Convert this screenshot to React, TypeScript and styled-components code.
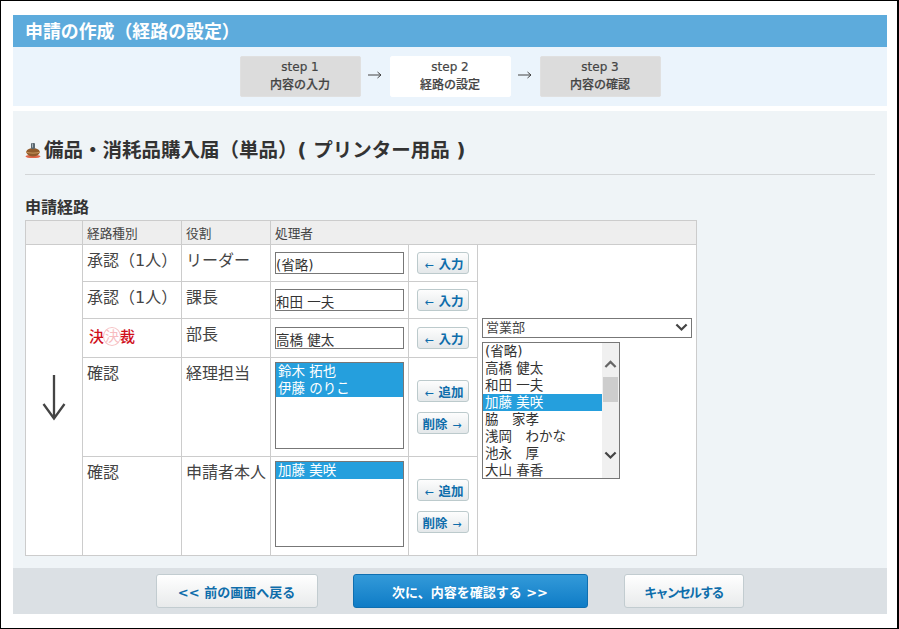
import styled, { createGlobalStyle } from "styled-components";

const GlobalStyle = createGlobalStyle`
  html, body {
    margin: 0;
    padding: 0;
    background: #fff;
  }
  body {
    font-family: "DejaVu Sans", "Noto Sans CJK JP", sans-serif;
    color: #333;
  }
`;

const Frame = styled.div`
  box-sizing: border-box;
  width: 899px;
  height: 629px;
  padding: 14px 10px 14px 12px;
  border: 1px solid #000;
  border-right-width: 2px;
  display: flex;
  flex-direction: column;
`;
const TitleBar = styled.h1`
  margin: 0;
  height: 32px;
  padding-left: 12px;
  background: #5dabdc;
  color: #fff;
  font-size: 17.9px;
  font-weight: 700;
  line-height: 34px;
`;
const StepBar = styled.div`
  height: 59px;
  background: #ebf4fc;
  display: flex;
  justify-content: center;
  align-items: flex-start;
  padding-top: 9px;
  box-sizing: border-box;
  margin-bottom: 5px;
`;
const Step = styled.div<{ $active?: boolean }>`
  box-sizing: border-box;
  width: 121px;
  height: 41px;
  border-radius: 2px;
  background: ${(props) => (props.$active ? "#fff" : "#dcdcdc")};
  border: 1px solid ${(props) => (props.$active ? "#fff" : "#e0e0e0")};
  text-align: center;
  font-size: 12px;
  font-weight: 500;
  line-height: 18px;
  color: #444;
  padding-top: 1px;
  -webkit-text-stroke: 0.2px #444;
`;
const StepNum = styled.div`
  font-size: 12px;
  font-weight: 400;
`;
const StepArrow = styled.div`
  width: 29px;
  height: 38px;
  display: flex;
  align-items: center;
  justify-content: center;
  svg {
    display: block;
  }
`;
const Content = styled.main`
  flex: 1;
  background: #eff4f7;
  padding: 0 12px;
`;
const Heading = styled.h2`
  margin: 0;
  height: 64px;
  border-bottom: 1px solid #d3d6d8;
  display: flex;
  align-items: center;
  padding-top: 11px;
  box-sizing: border-box;
  font-size: 19.5px;
  font-weight: 700;
  color: #333;
  white-space: nowrap;
  svg {
    margin-right: 3px;
    margin-top: 3px;
  }
`;
const SectionLabel = styled.h3`
  margin: 21px 0 0;
  height: 24px;
  font-size: 16px;
  font-weight: 700;
  line-height: 24px;
  color: #333;
`;
const RouteTable = styled.table`
  border-collapse: collapse;
  table-layout: fixed;
  width: 671px;
  background: #fff;
  th,
  td {
    border: 1px solid #ccc;
    padding: 0;
    box-sizing: border-box;
  }
`;
const Column = styled.col<{ $w: number }>`
  width: ${(props) => props.$w}px;
`;
const HeadCell = styled.th`
  height: 24px;
  background: #eee;
  font-size: 12.7px;
  font-weight: 400;
  text-align: left;
  padding-left: 4px !important;
  color: #444;
`;
const TextCell = styled.td<{ $h: number }>`
  height: ${(props) => props.$h}px;
  vertical-align: top;
  font-size: 16px;
  line-height: 22px;
  padding: 5px 0 0 4px !important;
  color: #444;
  white-space: nowrap;
`;
const ArrowCell = styled.td`
  text-align: center;
  vertical-align: middle;
  padding-bottom: 4px !important;
  svg {
    display: block;
    margin: 0 auto;
  }
`;
const FieldCell = styled.td`
  vertical-align: middle;
  padding-left: 4px !important;
`;
const ListCell = styled.td`
  vertical-align: top;
  padding: 4px 0 0 4px !important;
`;
const NameInput = styled.div`
  box-sizing: border-box;
  width: 129px;
  height: 22px;
  border: 1px solid #777;
  background: #fff;
  font-size: 13.5px;
  line-height: 25px;
  color: #333;
  overflow: hidden;
`;
const ListBox = styled.div<{ $h: number; $w: number }>`
  box-sizing: border-box;
  width: ${(props) => props.$w}px;
  height: ${(props) => props.$h}px;
  border: 1px solid #777;
  background: #fff;
  display: flex;
  overflow: hidden;
`;
const ListItems = styled.div`
  flex: 1;
  min-width: 0;
`;
const ListItem = styled.div<{ $selected?: boolean }>`
  height: 17px;
  line-height: 17px;
  font-size: 13.5px;
  padding-left: 2px;
  white-space: pre;
  background: ${(props) => (props.$selected ? "#259fdd" : "transparent")};
  color: ${(props) => (props.$selected ? "#fff" : "#333")};
`;
const ScrollTrack = styled.div`
  width: 17px;
  background: #f0f0f0;
  display: flex;
  flex-direction: column;
  align-items: center;
  justify-content: space-between;
  position: relative;
  padding: 17px 0 18px;
  box-sizing: border-box;
  svg {
    display: block;
  }
`;
const ScrollThumb = styled.div`
  position: absolute;
  top: 34px;
  left: 1px;
  width: 15px;
  height: 25px;
  background: #cdcdcd;
`;
const ButtonCell = styled.td`
  vertical-align: middle;
`;
const ButtonStack = styled.div`
  display: flex;
  flex-direction: column;
  align-items: center;
  gap: 10px;
`;
const SmallButton = styled.button`
  box-sizing: border-box;
  width: 52px;
  height: 22px;
  padding: 0;
  border: 1px solid #bccacc;
  border-radius: 3px;
  background: linear-gradient(#fdfdfd, #e4e8ea);
  color: #0e6dab;
  font-family: "Noto Sans CJK JP", sans-serif;
  font-size: 12.5px;
  font-weight: 700;
  white-space: nowrap;
`;
const ButtonArrow = styled.span`
  font-family: "DejaVu Sans", sans-serif;
  font-size: 11px;
  font-weight: 400;
  margin: 0 2px;
`;
const PickerCell = styled.td`
  vertical-align: middle;
  padding: 0 0 4px 4px !important;
`;
const Dropdown = styled.div`
  box-sizing: border-box;
  width: 210px;
  height: 20px;
  border: 1px solid #777;
  background: #fff;
  font-size: 13px;
  line-height: 21px;
  padding-left: 3px;
  margin-bottom: 4px;
  display: flex;
  justify-content: space-between;
  align-items: center;
  color: #444;
  svg {
    margin-right: 3px;
  }
`;
const Stamp = styled.span`
  display: inline-flex;
  align-items: center;
  margin: 3px 0 0 2px;
  color: #d0101c;
  font-size: 15px;
  font-weight: 500;
  line-height: 18px;
`;
const StampMark = styled.span`
  box-sizing: border-box;
  width: 18px;
  height: 19px;
  margin: 0 -1px;
  border: 1px solid #f6c4c6;
  border-radius: 50%;
  color: #f7bcc0;
  font-size: 14px;
  font-weight: 400;
  line-height: 17px;
  text-align: center;
`;
const Footer = styled.footer`
  height: 46px;
  background: #dbe0e4;
  display: flex;
  justify-content: center;
  align-items: flex-start;
  padding: 6px 1px 0 0;
  box-sizing: border-box;
  gap: 35px;
`;
const FooterButton = styled.button<{ $w: number; $primary?: boolean; $tight?: boolean }>`
  box-sizing: border-box;
  width: ${(props) => props.$w}px;
  height: 34px;
  padding: 0;
  border-radius: 3px;
  border: 1px solid ${(props) => (props.$primary ? "#0f6fb0" : "#c2ccd0")};
  background: ${(props) =>
    props.$primary
      ? "linear-gradient(#339ad9, #0f7cc6)"
      : "linear-gradient(#ffffff, #e8eaeb)"};
  color: ${(props) => (props.$primary ? "#fff" : "#0e6dab")};
  font-family: inherit;
  font-size: 13px;
  font-weight: 700;
  white-space: nowrap;
  letter-spacing: ${(props) => (props.$tight ? "-1.8px" : "0")};
  margin-left: ${(props) => (props.$tight ? "1px" : "0")};
`;

const Chevron = ({ up, size = 14 }: { up?: boolean; size?: number }) => (
  <svg width={size} height={size * 0.65} viewBox="0 0 14 9">
    <path
      d={up ? "M1.5 7.5 L7 2 L12.5 7.5" : "M1.5 1.5 L7 7 L12.5 1.5"}
      fill="none"
      stroke={up ? "#666" : "#444"}
      strokeWidth="2.4"
    />
  </svg>
);

const SmallArrow = () => (
  <svg width="14" height="8" viewBox="0 0 14 8">
    <path d="M0 4 H13 M9.5 1 L13 4 L9.5 7" fill="none" stroke="#444" strokeWidth="1" />
  </svg>
);

const TopIcon = () => (
  <svg width="16" height="18" viewBox="0 0 16 18">
    <ellipse cx="8" cy="15.5" rx="7.5" ry="1.6" fill="#e0664a" />
    <path d="M1 11 C2 8 5 7 8 7 C11 7 14 8 15 11 C14 14 11 15.5 8 15.5 C5 15.5 2 14 1 11 Z" fill="#8f5a2c" />
    <path d="M1 11 C4 12.5 12 12.5 15 11" fill="none" stroke="#c9985e" strokeWidth="1" />
    <rect x="6" y="2" width="4" height="6" rx="1" fill="#5b6870" />
    <rect x="7" y="2.5" width="1" height="4" fill="#aab4ba" />
  </svg>
);

const DownArrow = () => (
  <svg width="24" height="46" viewBox="0 0 24 46">
    <path d="M12 0 V44 M1.5 29 L12 43.5 L22.5 29" fill="none" stroke="#444" strokeWidth="2.3" />
  </svg>
);

const people = [
  "(省略)",
  "高橋 健太",
  "和田 一夫",
  "加藤 美咲",
  "脇　家孝",
  "浅岡　わかな",
  "池永　厚",
  "大山 春香",
];

const InputButton = () => (
  <ButtonStack>
    <SmallButton>
      <ButtonArrow>←</ButtonArrow> 入力
    </SmallButton>
  </ButtonStack>
);

const AddRemoveButtons = () => (
  <ButtonStack>
    <SmallButton>
      <ButtonArrow>←</ButtonArrow> 追加
    </SmallButton>
    <SmallButton>
      削除 <ButtonArrow>→</ButtonArrow>
    </SmallButton>
  </ButtonStack>
);

function App() {
  return (
    <Frame>
      <GlobalStyle />
      <TitleBar>申請の作成（経路の設定）</TitleBar>
      <StepBar>
        <Step>
          <StepNum>step 1</StepNum>内容の入力
        </Step>
        <StepArrow>
          <SmallArrow />
        </StepArrow>
        <Step $active>
          <StepNum>step 2</StepNum>経路の設定
        </Step>
        <StepArrow>
          <SmallArrow />
        </StepArrow>
        <Step>
          <StepNum>step 3</StepNum>内容の確認
        </Step>
      </StepBar>
      <Content>
        <Heading>
          <TopIcon />
          備品・消耗品購入届（単品）( プリンター用品 )
        </Heading>
        <SectionLabel>申請経路</SectionLabel>
        <RouteTable>
          <colgroup>
            <Column $w={57} />
            <Column $w={99} />
            <Column $w={89} />
            <Column $w={138} />
            <Column $w={69} />
            <Column $w={219} />
          </colgroup>
          <thead>
            <tr>
              <HeadCell />
              <HeadCell>経路種別</HeadCell>
              <HeadCell>役割</HeadCell>
              <HeadCell colSpan={3}>処理者</HeadCell>
            </tr>
          </thead>
          <tbody>
            <tr>
              <ArrowCell rowSpan={5}>
                <DownArrow />
              </ArrowCell>
              <TextCell $h={37}>承認（1人）</TextCell>
              <TextCell $h={37}>リーダー</TextCell>
              <FieldCell>
                <NameInput>(省略)</NameInput>
              </FieldCell>
              <ButtonCell>
                <InputButton />
              </ButtonCell>
              <PickerCell rowSpan={5}>
                <Dropdown>
                  営業部
                  <Chevron size={13} />
                </Dropdown>
                <ListBox $w={138} $h={137}>
                  <ListItems>
                    {people.map((name, i) => (
                      <ListItem key={name} $selected={i === 3}>
                        {name}
                      </ListItem>
                    ))}
                  </ListItems>
                  <ScrollTrack>
                    <Chevron up size={13} />
                    <ScrollThumb />
                    <Chevron size={13} />
                  </ScrollTrack>
                </ListBox>
              </PickerCell>
            </tr>
            <tr>
              <TextCell $h={37}>承認（1人）</TextCell>
              <TextCell $h={37}>課長</TextCell>
              <FieldCell>
                <NameInput>和田 一夫</NameInput>
              </FieldCell>
              <ButtonCell>
                <InputButton />
              </ButtonCell>
            </tr>
            <tr>
              <TextCell $h={39}>
                <Stamp>
                  決<StampMark>決</StampMark>裁
                </Stamp>
              </TextCell>
              <TextCell $h={39}>部長</TextCell>
              <FieldCell>
                <NameInput>高橋 健太</NameInput>
              </FieldCell>
              <ButtonCell>
                <InputButton />
              </ButtonCell>
            </tr>
            <tr>
              <TextCell $h={99}>確認</TextCell>
              <TextCell $h={99}>経理担当</TextCell>
              <ListCell>
                <ListBox $w={129} $h={87}>
                  <ListItems>
                    <ListItem $selected>鈴木 拓也</ListItem>
                    <ListItem $selected>伊藤 のりこ</ListItem>
                  </ListItems>
                </ListBox>
              </ListCell>
              <ButtonCell>
                <AddRemoveButtons />
              </ButtonCell>
            </tr>
            <tr>
              <TextCell $h={99}>確認</TextCell>
              <TextCell $h={99}>申請者本人</TextCell>
              <ListCell>
                <ListBox $w={129} $h={86}>
                  <ListItems>
                    <ListItem $selected>加藤 美咲</ListItem>
                  </ListItems>
                </ListBox>
              </ListCell>
              <ButtonCell>
                <AddRemoveButtons />
              </ButtonCell>
            </tr>
          </tbody>
        </RouteTable>
      </Content>
      <Footer>
        <FooterButton $w={162}>&lt;&lt; 前の画面へ戻る</FooterButton>
        <FooterButton $w={235} $primary>
          次に、内容を確認する &gt;&gt;
        </FooterButton>
        <FooterButton $w={120} $tight>
          キャンセルする
        </FooterButton>
      </Footer>
    </Frame>
  );
}

export default App;
